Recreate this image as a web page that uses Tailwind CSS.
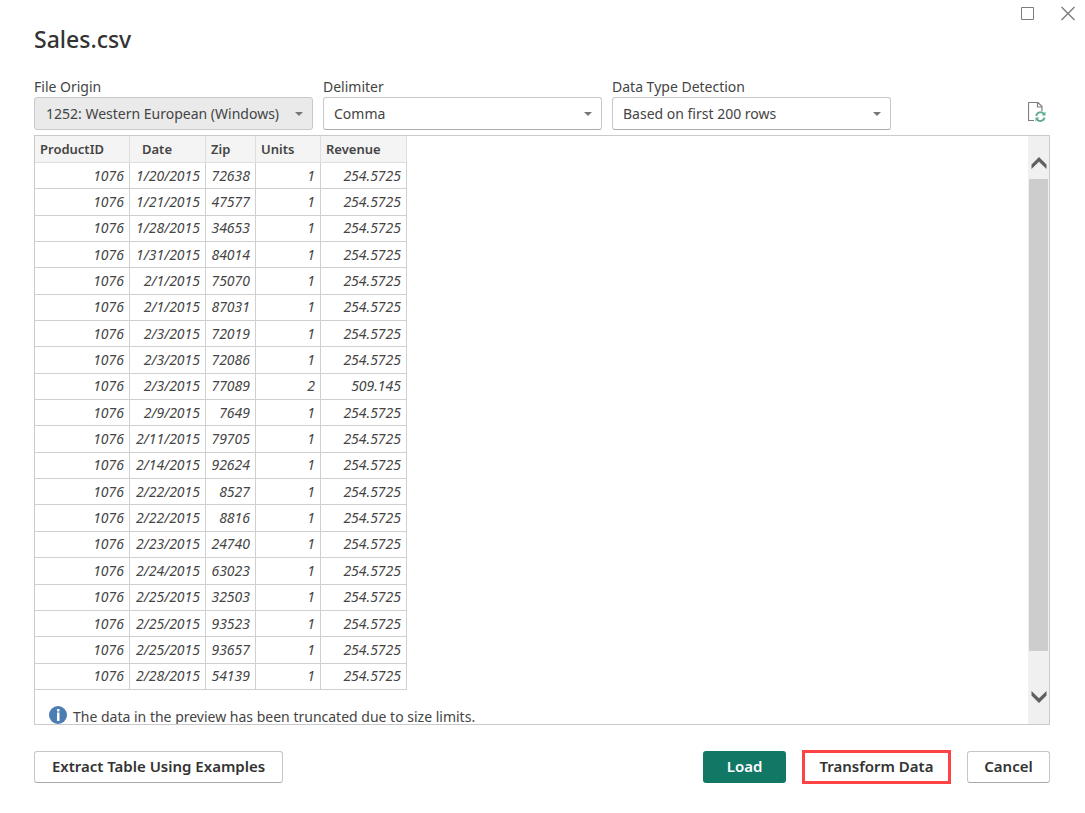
<!DOCTYPE html>
<html lang="en">

<head>
    <meta charset="UTF-8" />
    <meta name="viewport" content="width=device-width, initial-scale=1.0" />
    <title>Sales.csv</title>
    <script src="https://cdn.jsdelivr.net/npm/@tailwindcss/browser@4"></script>
</head>

<body class="h-screen flex flex-col bg-white text-[#444] font-['Noto_Sans',sans-serif] text-sm">
    <!-- Window controls -->
    <div class="flex justify-end gap-6 pt-[5px] pr-[9px] h-6 shrink-0">
        <button type="button" aria-label="Maximize" class="size-4">
            <svg viewBox="0 0 16 16" class="size-4" fill="none" stroke="#7d7d7d"><path d="M1.5 2.5h12v12h-12z" /></svg>
        </button>
        <button type="button" aria-label="Close" class="size-4">
            <svg viewBox="0 0 16 16" class="size-4" fill="none" stroke="#7d7d7d" stroke-width="1.4"><path d="M1.500 2l13 13M14.500 2l-13 13" /></svg>
        </button>
    </div>

    <main class="flex-1 min-h-0 flex flex-col pl-[34px] pr-[35px] pb-[29px]">
        <h1 class="text-[23px] leading-[30px] font-medium text-[#333]">Sales.csv</h1>

        <!-- Import options -->
        <div class="flex items-end justify-between mt-[23px]">
            <div class="flex gap-[10px]">
                <div class="w-[279px]">
                    <label for="origin" class="block leading-5">File Origin</label>
                    <div class="relative">
                        <select id="origin" class="appearance-none w-full h-[33px] pl-[11px] pr-6 border border-[#c8c8c8] rounded-[3px] bg-[#eaeaea]">
                            <option>1252: Western European (Windows)</option>
                        </select>
                        <svg viewBox="0 0 8 4" class="absolute right-[10px] top-[15px] w-2 h-1 pointer-events-none" fill="#777"><path d="M0 0h8L4 4z" /></svg>
                    </div>
                </div>
                <div class="w-[279px]">
                    <label for="delimiter" class="block leading-5">Delimiter</label>
                    <div class="relative">
                        <select id="delimiter" class="appearance-none w-full h-[33px] pl-[10px] pr-6 border border-[#c8c8c8] border-b-[#aaa] rounded-[3px] bg-white">
                            <option>Comma</option>
                        </select>
                        <svg viewBox="0 0 8 4" class="absolute right-[10px] top-[15px] w-2 h-1 pointer-events-none" fill="#777"><path d="M0 0h8L4 4z" /></svg>
                    </div>
                </div>
                <div class="w-[279px]">
                    <label for="detection" class="block leading-5">Data Type Detection</label>
                    <div class="relative">
                        <select id="detection" class="appearance-none w-full h-[33px] pl-[10px] pr-6 border border-[#c8c8c8] border-b-[#aaa] rounded-[3px] bg-white">
                            <option>Based on first 200 rows</option>
                        </select>
                        <svg viewBox="0 0 8 4" class="absolute right-[10px] top-[15px] w-2 h-1 pointer-events-none" fill="#777"><path d="M0 0h8L4 4z" /></svg>
                    </div>
                </div>
            </div>
            <button type="button" aria-label="Refresh preview" class="mb-2 mr-1">
                <svg viewBox="0 0 18 20" class="w-[18px] h-5" fill="none">
                    <path d="M6 18.500H.500V.500H10l4 4V9M9.500 .500V5H14" stroke="#808080" stroke-width="1.200" />
                    <path d="M8.300 14a4.300 4.300 0 0 1 7.700-2M16.500 15.500a4.300 4.300 0 0 1-7.700 1.700" stroke="#62ad90" stroke-width="1.900" />
                    <path d="M17.500 9.500v4h-4zM7.500 19.500v-4h4z" fill="#62ad90" />
                </svg>
            </button>
        </div>

        <!-- Preview -->
        <section class="flex-1 min-h-0 flex mt-[5px] border border-[#cacaca]">
            <div class="flex-1 overflow-hidden">
                <table class="table-fixed w-[372px] h-[554px] border-separate border-spacing-0 text-sm leading-4">
                    <colgroup>
                        <col class="w-[95px]" />
                        <col class="w-[76px]" />
                        <col class="w-[50px]" />
                        <col class="w-[65px]" />
                        <col class="w-[86px]" />
                    </colgroup>
                    <thead class="bg-[#f4f4f4] text-left text-[13px]">
                        <tr class="*:h-[27px] *:border-r *:border-b *:border-[#dedede] *:px-[5px] *:font-semibold">
                            <th>ProductID</th>
                            <th><span class="pl-[7px]">Date</span></th>
                            <th>Zip</th>
                            <th>Units</th>
                            <th>Revenue</th>
                        </tr>
                    </thead>
                    <tbody id="rows" class="italic text-right"></tbody>
                </table>
                <p class="flex items-center gap-[6px] mt-4 pl-[14px] leading-5">
                    <svg viewBox="0 0 18 18" class="size-[18px] shrink-0 mb-1">
                        <circle cx="9" cy="9" r="9" fill="#4a7db3" />
                        <path d="M8 3h2.500v2.500H8zM8 6.500h2.500V15H8z" fill="#fff" />
                    </svg>
                    <span>The data in the preview has been truncated due to size limits.</span>
                </p>
            </div>

            <!-- Scrollbar -->
            <div class="w-[21px] flex flex-col bg-[#f0f0f0]">
                <button type="button" aria-label="Scroll up" class="h-[43px] pt-[11px] flex items-center justify-center">
                    <svg viewBox="0 0 16 12" class="w-4 h-3" fill="#606060"><path d="M8 0l7.500 7.500V12L8 4.800.5 12V7.500z" /></svg>
                </button>
                <div class="flex-1">
                    <div class="h-[94%] mr-px ml-px bg-[#cdcdcd]"></div>
                </div>
                <button type="button" aria-label="Scroll down" class="h-[43px] pb-[11px] flex items-center justify-center">
                    <svg viewBox="0 0 16 12" class="w-4 h-3" fill="#606060"><path d="M8 12L.5 4.500V0L8 7.200 15.500 0v4.500z" /></svg>
                </button>
            </div>
        </section>

        <!-- Actions -->
        <footer class="flex items-center mt-[25px] h-[34px] shrink-0 text-[15px] font-semibold text-[#333]">
            <button type="button" class="h-8 w-[249px] border border-[#c6c6c6] border-b-[#aaa] rounded-[3px]">Extract Table Using Examples</button>
            <div class="ml-auto flex items-center gap-4">
                <button type="button" class="h-8 w-[83px] rounded-[3px] bg-[#117865] text-white">Load</button>
                <button type="button" class="h-[34px] w-[149px] border-3 border-[#fd4343]">Transform Data</button>
                <button type="button" class="h-8 w-[83px] border border-[#c6c6c6] border-b-[#aaa] rounded-[3px]">Cancel</button>
            </div>
        </footer>
    </main>

    <script>
        const data = [
            ["1/20/2015", 72638], ["1/21/2015", 47577], ["1/28/2015", 34653], ["1/31/2015", 84014],
            ["2/1/2015", 75070], ["2/1/2015", 87031], ["2/3/2015", 72019], ["2/3/2015", 72086],
            ["2/3/2015", 77089, 2, 509.145], ["2/9/2015", 7649], ["2/11/2015", 79705], ["2/14/2015", 92624],
            ["2/22/2015", 8527], ["2/22/2015", 8816], ["2/23/2015", 24740], ["2/24/2015", 63023],
            ["2/25/2015", 32503], ["2/25/2015", 93523], ["2/25/2015", 93657], ["2/28/2015", 54139]
        ];

        document.getElementById("rows").innerHTML = data.map(([date, zip, units = 1, revenue = 254.5725]) => `
            <tr class="*:border-r *:border-b *:border-[#d0d0d0] *:pl-px *:pr-[5px]">
                <td>1076</td><td>${date}</td><td>${zip}</td><td>${units}</td><td>${revenue}</td>
            </tr>`).join("");
    </script>
</body>

</html>
